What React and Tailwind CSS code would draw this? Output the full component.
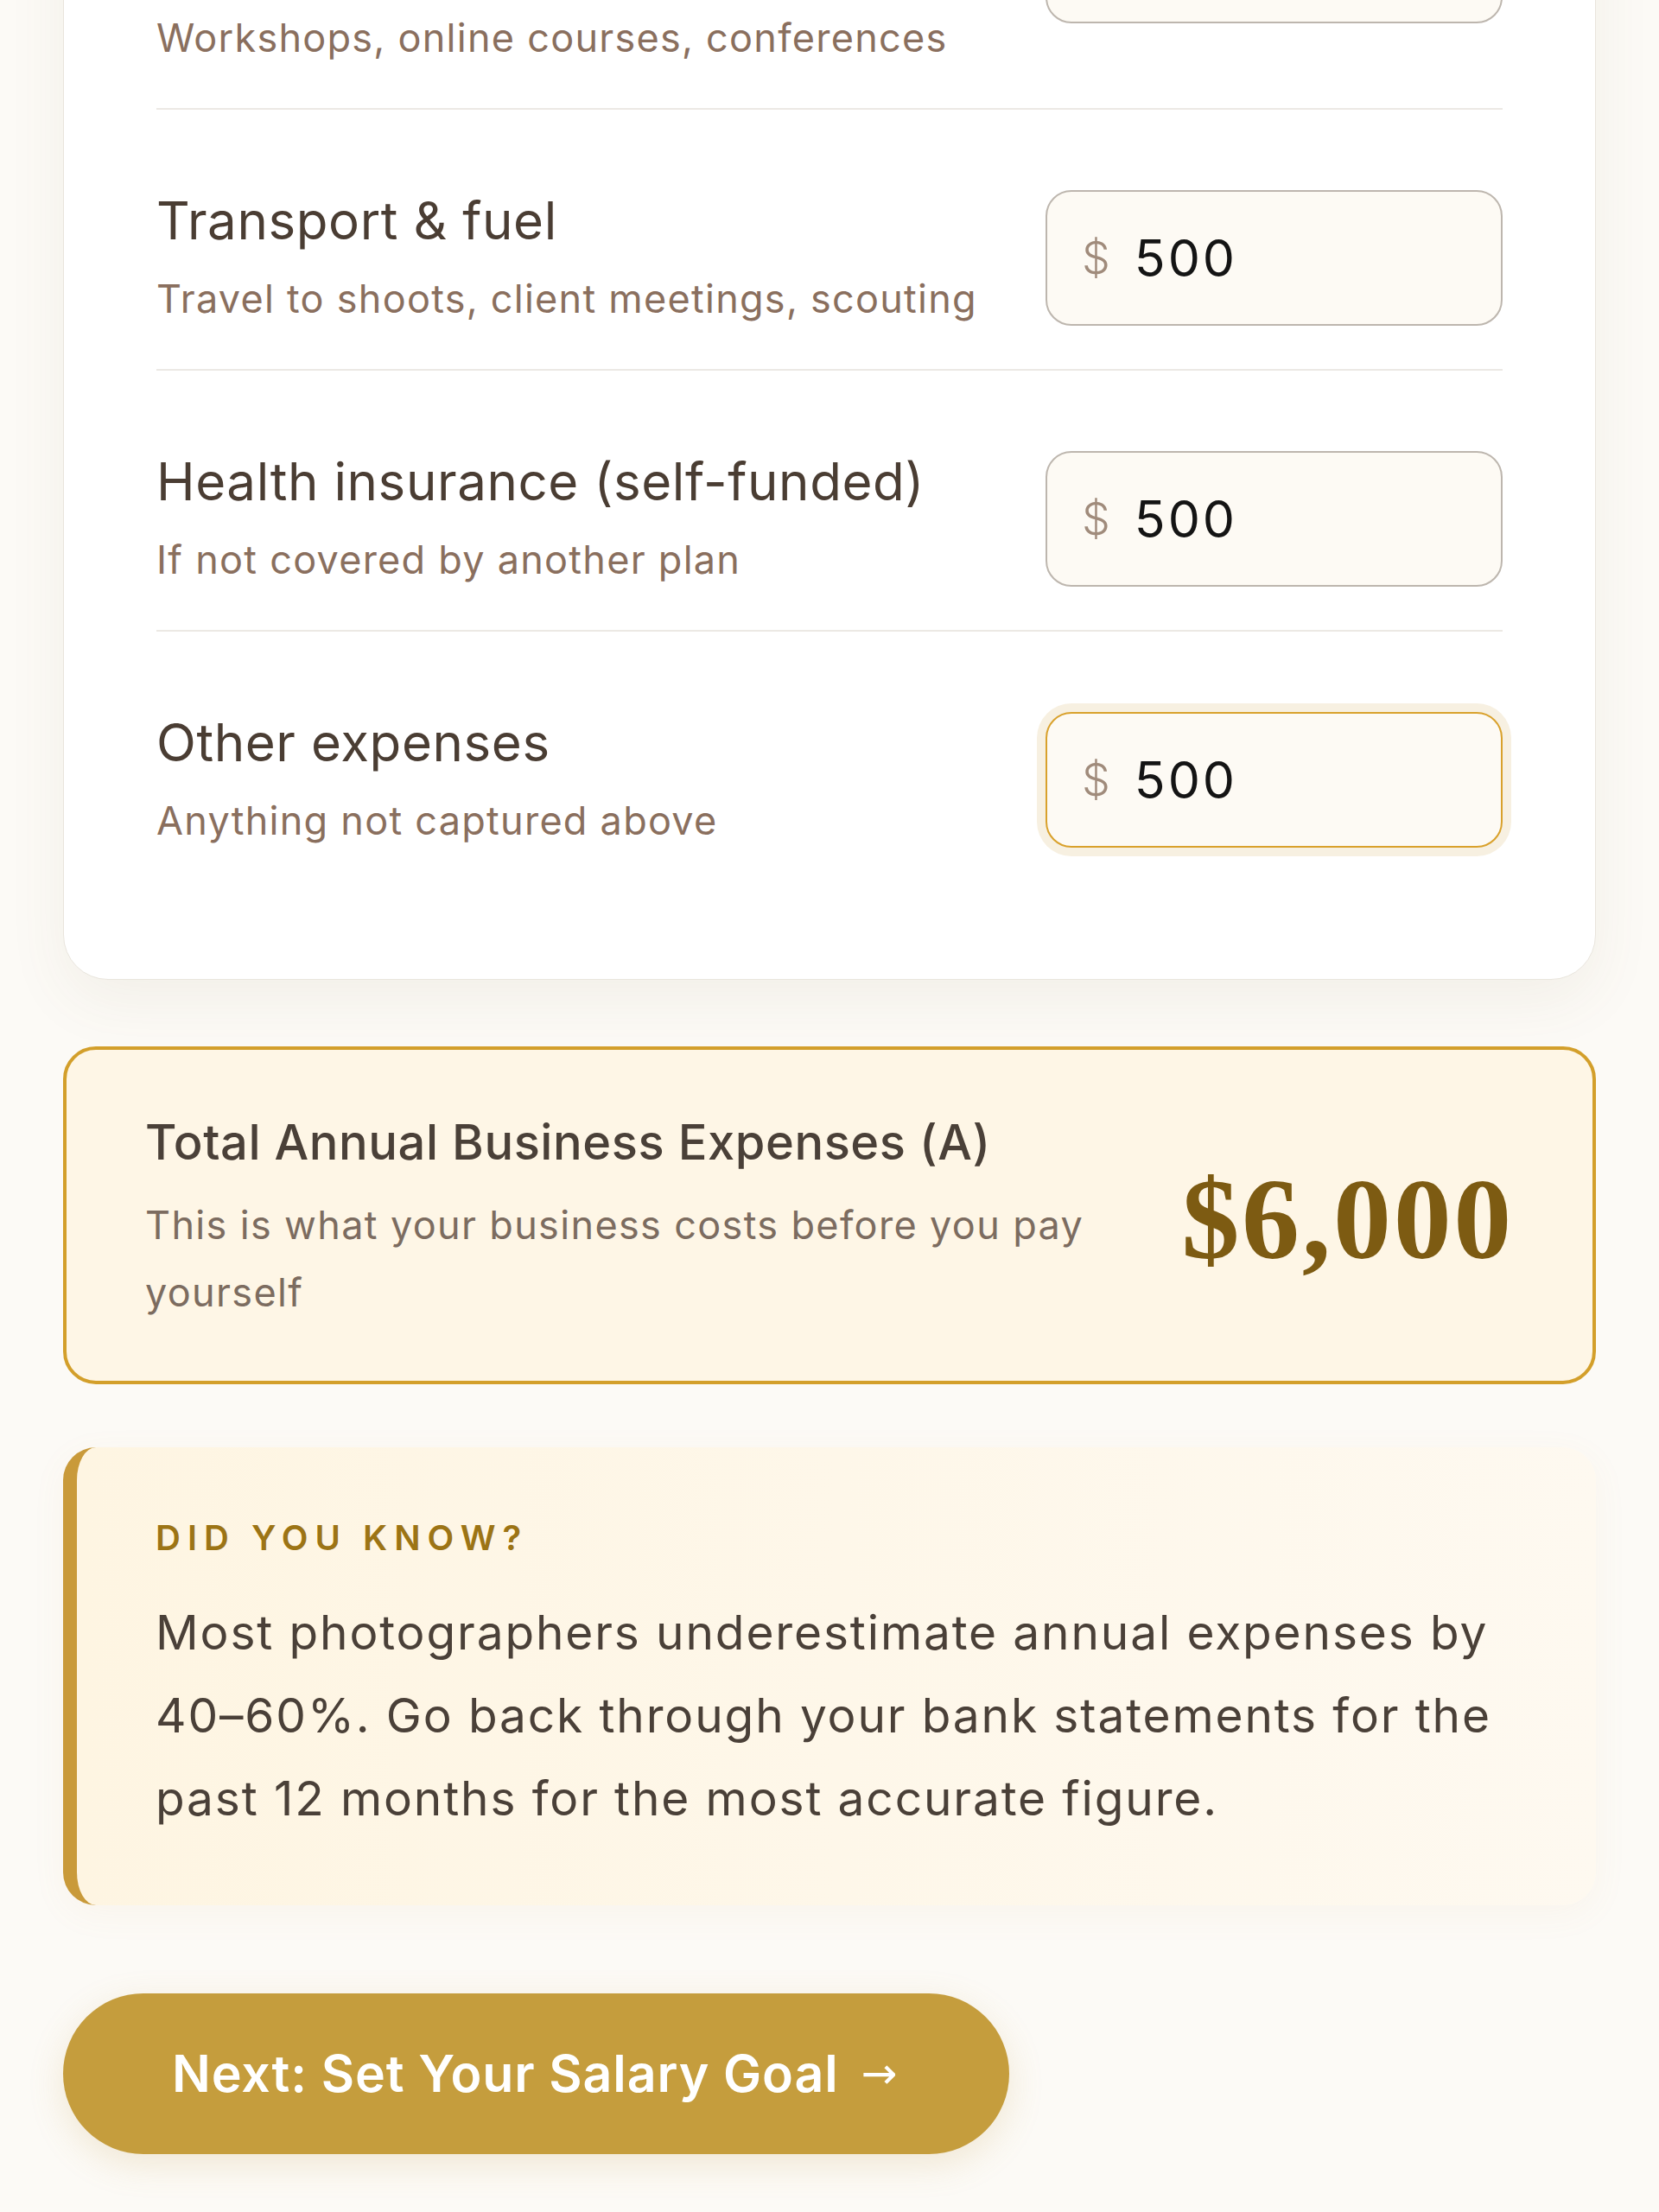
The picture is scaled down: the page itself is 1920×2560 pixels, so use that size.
import React from 'react';

const rows = [
  {
    title: 'Education & professional development',
    sub: 'Workshops, online courses, conferences',
    value: '500',
    first: true,
  },
  { title: 'Transport & fuel', sub: 'Travel to shoots, client meetings, scouting', value: '500' },
  { title: 'Health insurance (self-funded)', sub: 'If not covered by another plan', value: '500' },
  { title: 'Other expenses', sub: 'Anything not captured above', value: '500', focused: true, last: true },
];

const MoneyInput = ({ value, focused, className = '' }) => (
  <div
    className={`w-[529px] h-[157px] shrink-0 rounded-[30px] border-2 bg-[#fdfaf4] flex items-center pl-[40px] ${
      focused
        ? 'border-[#d9a12c] shadow-[0_0_0_10px_#f7f0e1]'
        : 'border-[#bdb6ae]'
    } ${className}`}
  >
    <span className="text-[52px] font-light text-[#a08b7b] leading-none">$</span>
    <span className="ml-[28px] text-[59px] tracking-[0.05em] text-[#141414] leading-none">{value}</span>
  </div>
);

const ExpenseRow = ({ row }) => (
  <div
    className={`flex items-center justify-between gap-[40px] py-[48px] ${
      row.last ? '' : 'border-b-2 border-[#ece9e4]'
    }`}
  >
    <div className="flex-1">
      <div className="text-[60px] leading-[75px] tracking-[0.01em] text-[#4a3d33]">{row.title}</div>
      <div className="mt-[20px] text-[45px] leading-[66px] tracking-[0.028em] text-[#8a6f5e]">{row.sub}</div>
    </div>
    <MoneyInput value={row.value} focused={row.focused} className={row.first ? 'mb-[22px]' : ''} />
  </div>
);

export default function App() {
  return (
    <div
      className="h-[2560px] overflow-hidden bg-[#fcfaf6]"
      style={{ fontFamily: 'Inter, "Noto Sans", sans-serif' }}
    >
      <div className="px-[73px] -mt-[316px]">
        {/* expense list card */}
        <div className="bg-white rounded-[52px] border border-[#e9e5dd] shadow-[0_24px_70px_rgba(120,100,60,0.07)] px-[107px] pt-[108px] pb-[102px]">
          <div className="flex flex-col gap-[43px]">
            {rows.map((row) => (
              <ExpenseRow key={row.title} row={row} />
            ))}
          </div>
        </div>

        {/* total */}
        <div className="mt-[77px] rounded-[38px] border-4 border-[#d39f2b] bg-[#fef6e6] px-[91px] pt-[71px] pb-[63px] flex items-center justify-between">
          <div className="w-[1120px]">
            <div className="text-[56px] leading-[72px] font-medium tracking-[0.01em] text-[#4a4038]">
              Total Annual Business Expenses (A)
            </div>
            <div className="mt-[21px] text-[45px] leading-[78px] tracking-[0.03em] text-[#7c6c60]">
              This is what your business costs before you pay yourself
            </div>
          </div>
          <div
            className="text-[134px] font-bold leading-none tracking-[0.02em] text-[#7d5b12]"
            style={{ fontFamily: '"Liberation Serif", "DejaVu Serif", serif' }}
          >
            $6,000
          </div>
        </div>

        {/* tip */}
        <div className="mt-[73px] rounded-[38px] border-l-[16px] border-[#c99a3a] bg-gradient-to-r from-[#fef5e2] to-[#fef9f0] shadow-[0_10px_40px_rgba(200,160,80,0.06)] pl-[91px] pr-[84px] pt-[76px] pb-[76px]">
          <div className="text-[40px] leading-[58px] font-semibold tracking-[0.2em] text-[#9c7415]">
            DID YOU KNOW?
          </div>
          <p className="mt-[32px] text-[55px] leading-[96px] tracking-[0.034em] text-[#4a4038]">
            Most photographers underestimate annual expenses by 40–60%. Go back through your bank statements for
            the past 12 months for the most accurate figure.
          </p>
        </div>

        {/* next */}
        <button className="mt-[102px] w-[1095px] h-[186px] rounded-full bg-[#c59d3d] shadow-[0_12px_40px_rgba(190,150,60,0.18)] flex items-center pl-[126px] text-white text-[59px] tracking-[0.015em] font-semibold">
          Next: Set Your Salary Goal
          <span
            className="ml-[26px] text-[50px] font-normal"
            style={{ fontFamily: '"DejaVu Sans", sans-serif' }}
          >
            →
          </span>
        </button>
      </div>
    </div>
  );
}
